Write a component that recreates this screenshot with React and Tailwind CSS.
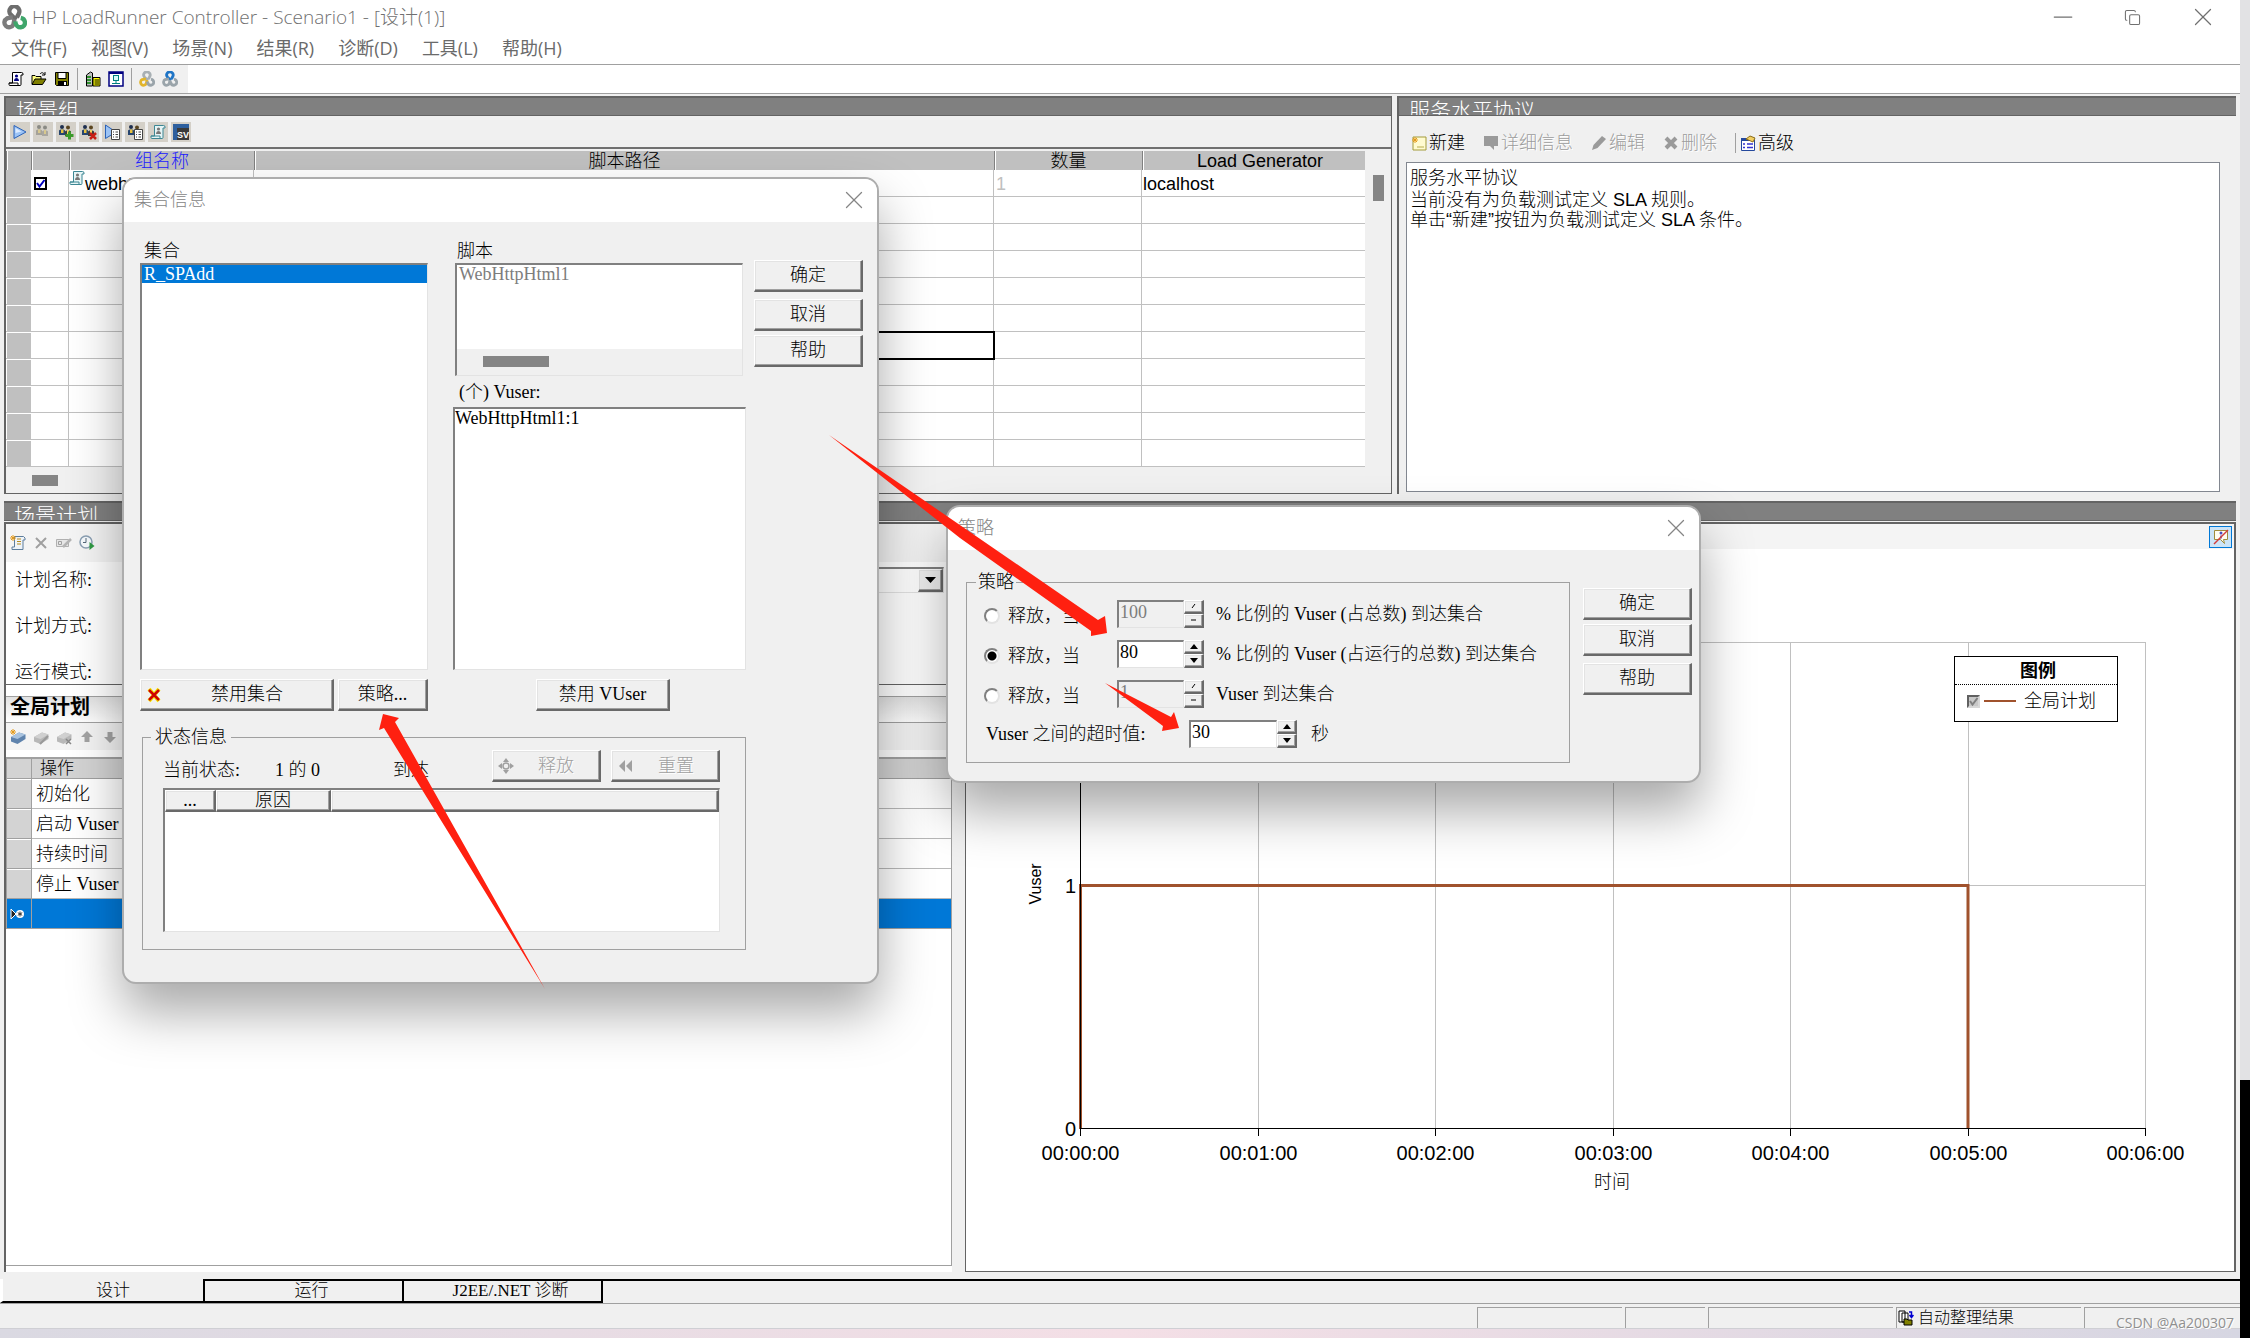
import { useState } from 'react';
import { X, Minus, Copy } from 'lucide-react';

const SONG = "font-light font-['Liberation_Serif','Noto_Sans_CJK_SC',serif]";
const ARIAL = "font-['Liberation_Sans','Noto_Sans_CJK_SC',sans-serif]";
const SEGOE = "font-['Open_Sans','Noto_Sans_CJK_SC',sans-serif]";

const raised =
  'bg-[#f0f0f0] border-t border-l border-r-2 border-b-2 border-t-white border-l-white border-r-[#696969] border-b-[#696969] shadow-[inset_-1px_-1px_0_#a0a0a0,inset_1px_1px_0_#e3e3e3]';
const sunken = 'bg-white border-t-2 border-l-2 border-r border-b border-t-[#808080] border-l-[#808080] border-r-[#e3e3e3] border-b-[#e3e3e3]';

// --- small toolbar drawings, all on a 16x16 canvas ---
const Svg = ({ size = 16, children }) => (
  <svg width={size} height={size} viewBox="0 0 16 16" className="shrink-0" fill="none" aria-hidden="true">
    {children}
  </svg>
);

// three interlocked loops, the last one is open at the top
const Knot = ({ size = 16, top, left, right }) => (
  <Svg size={size}>
    <path d="M9 9.500L5.600 6.200A3.200 3.200 0 1 1 10.800 5.400L9.500 8" stroke={top} strokeWidth="2.800" />
    <path d="M7 7.800L3.200 8.600A3 3 0 1 0 7.300 12.500L8 9" stroke={left} strokeWidth="2.800" />
    <path d="M8.500 10.500C9 16 15.500 15 14.600 10.600C14.400 9.500 13.500 8.500 12 8.200" stroke={right} strokeWidth="2.800" />
  </Svg>
);

const ScriptIcon = ({ stroke = '#000', fill = '#fff', man = '#000080' }) => (
  <Svg>
    <path d="M4.500 1.500h9a1.500 1.500 0 0 1 1.500 1.500v1h-2v9.500a1 1 0 0 1-1 1H2a1 1 0 0 1-1-1V12h3.500z" fill={fill} stroke={stroke} />
    <path d="M1 12h9v2" stroke={stroke} />
    <circle cx="8.500" cy="5" r="1.600" fill={man} />
    <path d="M6 10c0-4 5-4 5 0z" fill={man} />
  </Svg>
);

const OpenIcon = () => (
  <Svg>
    <path d="M1 13V4.500h3l1 1h5V8" fill="#ffff80" stroke="#000" />
    <path d="M1 13.500l3-5.500h11l-3.500 5.500z" fill="#808000" stroke="#000" />
    <path d="M9 3c1.500-2 3.500-1.500 4.500.5M14 1v3h-3" stroke="#000" />
  </Svg>
);

const SaveIcon = () => (
  <Svg>
    <path d="M1.500 1.500h13v13h-12l-1-1z" fill="#808000" stroke="#000" />
    <path d="M4 1.500h8v6H4z" fill="#fff" stroke="#000" />
    <path d="M4 10h9v5H4z" fill="#000" />
    <path d="M10 11h2v3h-2z" fill="#fff" />
  </Svg>
);

const ServerIcon = () => (
  <Svg>
    <path d="M1.500 4l4-3 2 1v13h-6z" fill="#c0c0c0" stroke="#000" />
    <path d="M2 6h4M2 9h4M2 12h4" stroke="#008000" strokeWidth="1.500" />
    <path d="M8 6.500h7V15H8z" fill="#ffff00" stroke="#000" />
    <path d="M9.500 9H14M9.500 11H14M9.500 13H14" stroke="#000" />
  </Svg>
);

const MonitorIcon = () => (
  <Svg>
    <rect x="1" y="1" width="14" height="14" fill="#fff" stroke="#000080" strokeWidth="1.500" />
    <path d="M1 2h14" stroke="#000080" strokeWidth="2" />
    <rect x="5.500" y="4.500" width="5" height="5" fill="#d8f8f8" stroke="#008080" />
    <path d="M8 9.500v3M4 12.500h8" stroke="#008080" />
  </Svg>
);

const PlayIcon = () => (
  <Svg>
    <path d="M2 1.500L14 8 2 14.500z" fill="#9cc3f5" stroke="#2a62b8" />
    <path d="M3.500 4v5l6-1.500z" fill="#dcebff" />
  </Svg>
);

const ListSheet = () => (
  <g>
    <path d="M7.500 5.500h8v10h-8z" fill="#fff" stroke="#444" />
    <path d="M9 8h1M11.500 8H14M9 10.500h1M11.500 10.500H14M9 13h1M11.500 13H14" stroke="#444" />
  </g>
);

const People = ({ gray, mark }) => (
  <Svg>
    <circle cx="4" cy="3" r="2" fill={gray ? '#8a8a84' : '#1e2f4f'} />
    <path d="M1 11V6.500C1 5 7 5 7 6.500V11z" fill={gray ? '#a5a299' : '#27456f'} />
    <path d="M3 5.500h2.500V9H3z" fill={gray ? '#d8c88e' : '#e8c240'} />
    <circle cx="10" cy="3.500" r="2" fill={gray ? '#8a8a84' : '#5a4520'} />
    <path d="M7 12V7.500C7 6 13 6 13 7.500V12z" fill={gray ? '#aaa79f' : '#3d3d3d'} />
    <path d="M9 6h2v4H9z" fill={gray ? '#d8c88e' : '#f0d060'} />
    {mark === 'add' && <path d="M11.500 7.500v8M7.500 11.500h8" stroke="#3c9a2a" strokeWidth="3" />}
    {mark === 'del' && <path d="M9 9l6 6M15 9l-6 6" stroke="#c81e14" strokeWidth="2.500" />}
    {mark === 'list' && <ListSheet />}
  </Svg>
);

const PlayList = () => (
  <Svg>
    <path d="M1.500 1L12 8 1.500 14.500z" fill="#9cc3f5" stroke="#2a62b8" />
    <ListSheet />
  </Svg>
);

const SvIcon = () => (
  <Svg>
    <path d="M0 0h16v4H4v12H0z" fill="#2d5f9e" />
    <path d="M4 4h12v12H4z" fill="#3a3a3a" />
    <text x="10" y="14" textAnchor="middle" fontSize="9" fontWeight="bold" fill="#fff" fontFamily="Liberation Sans, sans-serif">
      SV
    </text>
  </Svg>
);

const Star = ({ x = 3, y = 3 }) => (
  <path
    d={`M${x - 3} ${y}h6M${x} ${y - 3}v6M${x - 2} ${y - 2}l4 4M${x + 2} ${y - 2}l-4 4`}
    stroke="#e39a1c"
    strokeWidth="1"
  />
);

const NewPlanIcon = () => (
  <Svg>
    <path d="M4.500 1.500h9l1.500 1.500v2h-2v9.500H2V12h2.500z" fill="#eef3f8" stroke="#5d7d9c" />
    <path d="M7 4h4M7 6.500h4M7 9h4" stroke="#b78b1e" />
    <Star />
  </Svg>
);

const CrossIcon = ({ color = '#a0a0a0', width = 2 }) => (
  <Svg>
    <path d="M3 3l10 10M13 3L3 13" stroke={color} strokeWidth={width} />
  </Svg>
);

const RenameIcon = () => (
  <Svg>
    <path d="M.5 4.500h12v7H.5z" fill="#e6e6e6" stroke="#b0b0b0" />
    <path d="M2.500 6.500h3v3h-3z" stroke="#a0a0a0" />
    <path d="M7 12l8-8" stroke="#b4b4b4" strokeWidth="2.500" />
  </Svg>
);

const ClockIcon = () => (
  <Svg>
    <circle cx="7" cy="7" r="6" fill="#f6fafd" stroke="#8ba0b4" strokeWidth="1.500" />
    <path d="M7 3v4.500H4" stroke="#55687a" />
    <path d="M10.500 7l5 4-5 4z" fill="#2f9a43" />
  </Svg>
);

const CubeIcon = ({ gray, mark }) => (
  <Svg>
    <path d="M1 8l8-4.500 6.500 2V10l-8 5L1 12.500z" fill={gray ? '#b8b8b8' : '#5f83ad'} />
    <path d="M1 8l8-4.500 6.500 2L7.500 10z" fill={gray ? '#d0d0d0' : '#a9c3df'} />
    {!gray && <Star />}
    {mark === 'edit' && <path d="M7 15l8-8" stroke="#999" strokeWidth="2" />}
    {mark === 'del' && <path d="M10 10l5 5M15 10l-5 5" stroke="#888" strokeWidth="1.500" />}
  </Svg>
);

const ArrowIcon = ({ down }) => (
  <Svg>
    <path d={down ? 'M8 14L2 8h3.500V3h5v5H14z' : 'M8 2l6 6h-3.500v5h-5V8H2z'} fill="#a3a3a3" />
  </Svg>
);

const NewSlaIcon = () => (
  <Svg>
    <path d="M2 2h10l3 0v13H2z" fill="#fffbd0" stroke="#a39b3a" />
    <path d="M6 12h7" stroke="#b8ad50" />
    <Star x={4} y={5} />
  </Svg>
);

const NoteIcon = () => (
  <Svg>
    <path d="M1 1h14v10h-4v4l-4-4H1z" fill="#9a9a9a" />
  </Svg>
);

const PencilIcon = () => (
  <Svg>
    <path d="M1 15l1.500-5L11 1l4 3-8.500 9z" fill="#9a9a9a" />
  </Svg>
);

const AdvancedIcon = () => (
  <Svg>
    <path d="M1.500 4.500h13v11h-13z" fill="#fff" stroke="#24489c" />
    <path d="M1 3h9v3H1z" fill="#24489c" />
    <path d="M3 9h2M7 9h6M3 12.500h2M7 12.500h6" stroke="#3434d0" strokeWidth="1.500" />
    <path d="M6 4l4-3 5 2-2 4z" fill="#f2cf63" stroke="#8a6b17" />
  </Svg>
);

const CollateIcon = () => (
  <Svg>
    <path d="M1 1h6v11H1zM4 3h6v9H4z" fill="#fff" stroke="#000" />
    <path d="M6 15V9h3l1 1h4v5z" fill="#808000" stroke="#000" />
    <path d="M11 2h2.500v5M11.500 5l2 2.500 2-2.500" stroke="#0000d0" strokeWidth="1.500" />
  </Svg>
);

const NoTipIcon = () => (
  <Svg>
    <path d="M1.500 1.500h13v9h-4l1 4-4-4h-6z" fill="#fffdf0" stroke="#a08c3c" />
    <circle cx="8" cy="4" r="1.500" fill="#4a4ac0" />
    <path d="M8 6.500v3" stroke="#4a4ac0" strokeWidth="1.500" />
    <path d="M1 15L15 1" stroke="#d23c3c" strokeWidth="1.500" />
  </Svg>
);

// --- shared controls ---
const PushButton = ({ className = 'justify-center', children, ...rest }) => (
  <button type="button" className={`h-8 flex items-center text-[18px] ${raised} ${className}`} {...rest}>
    {children}
  </button>
);

const IconButton = ({ label, className = '', children }) => (
  <button type="button" aria-label={label} className={`flex items-center justify-center shrink-0 ${className}`}>
    {children}
  </button>
);

const CheckBox = ({ label, disabled, className }) => {
  const [checked, setChecked] = useState(true);
  return (
    <span className="relative size-[13px] shrink-0">
      <input
        type="checkbox"
        aria-label={label}
        checked={checked}
        disabled={disabled}
        onChange={e => setChecked(e.target.checked)}
        className={`block size-[13px] appearance-none ${className}`}
      />
      {checked && (
        <svg className="absolute inset-0 pointer-events-none" width="13" height="13" viewBox="0 0 13 13" fill="none" aria-hidden="true">
          <path d="M3 6l2.500 3.500L10.500 3" stroke={disabled ? '#808080' : '#0000c0'} strokeWidth="2" />
        </svg>
      )}
    </span>
  );
};

const PanelHeader = ({ children }) => (
  <h2
    className={`h-5 pl-[10px] overflow-hidden leading-[26px] text-[21px] text-white bg-[#808080] border-t-2 border-b border-[#646464] ${SONG}`}
  >
    {children}
  </h2>
);

const SpinBox = ({ value, label, disabled, className = '' }) => {
  const [val, setVal] = useState(value);
  return (
    <div className={`flex h-7 ${className}`}>
      <input
        aria-label={label}
        value={val}
        disabled={disabled}
        onChange={e => setVal(e.target.value)}
        className={`flex-1 min-w-0 pl-px pb-1 text-[18px] ${sunken} disabled:bg-[#f0f0f0] disabled:text-[#7d7d7d]`}
      />
      <div className="w-5 flex flex-col">
        {['up', 'down'].map(dir => (
          <button
            key={dir}
            type="button"
            disabled={disabled}
            aria-label={`${label} ${dir}`}
            className={`flex-1 flex items-center justify-center ${raised}`}
          >
            <svg width="8" height="5" viewBox="0 0 8 5" aria-hidden="true">
              {disabled ? (
                <path d={dir === 'up' ? 'M5 0L2 4' : 'M1 2h5'} stroke="#000" fill="none" />
              ) : (
                <path d={dir === 'up' ? 'M4 0l4 5H0z' : 'M0 0h8L4 5z'} fill="#000" />
              )}
            </svg>
          </button>
        ))}
      </div>
    </div>
  );
};

const Dialog = ({ title, className, children }) => (
  <section
    role="dialog"
    aria-label={title}
    className={`absolute rounded-[14px] overflow-hidden border-2 border-[#adadad] bg-[#f0f0f0] shadow-[0_28px_52px_rgba(0,0,0,0.34)] ${SONG} ${className}`}
  >
    <header className="h-[43px] pl-[10px] pr-2 pb-px flex items-center justify-between bg-white text-[18px] text-[#858585]">
      <span>{title}</span>
      <IconButton label="关闭">
        <X size={30} strokeWidth={1} />
      </IconButton>
    </header>
    {children}
  </section>
);

// --- main window parts ---
const menus = ['文件(F)', '视图(V)', '场景(N)', '结果(R)', '诊断(D)', '工具(L)', '帮助(H)'];

const groupTools = [
  ['启动场景', <PlayIcon />],
  ['Vuser', <People gray />],
  ['添加组', <People mark="add" />],
  ['删除组', <People mark="del" />],
  ['运行时设置', <PlayList />],
  ['详细信息', <People mark="list" />],
  ['查看脚本', <ScriptIcon stroke="#3d8794" fill="#e6f4f5" man="#777" />],
  ['服务虚拟化', <SvIcon />],
];

const ScenarioGroups = () => {
  const th = 'h-[19px] p-0 font-normal leading-[18px] border-l border-l-[#808080] shadow-[inset_1px_0_0_#fff]';
  const td = 'h-[27px] p-0 border-b border-r border-[#c0c0c0] leading-[28px] overflow-hidden whitespace-nowrap';
  return (
    <section className="w-[1388px] shrink flex flex-col border-l-2 border-b border-r border-[#646464]">
      <PanelHeader>场景组</PanelHeader>
      <div className="h-[31px] px-1 flex items-center gap-[3px]">
        {groupTools.map(([label, icon]) => (
          <IconButton key={label} label={label} className="size-5 bg-[#d4d0c8]">
            {icon}
          </IconButton>
        ))}
      </div>
      <div className="pt-[2px] flex border-t-2 border-[#707070]">
        <table className={`flex-1 table-fixed border-separate border-spacing-0 text-[18px] bg-white ${ARIAL}`}>
          <colgroup>
            <col className="w-[25px]" />
            <col className="w-[38px]" />
            <col className="w-[185px]" />
            <col />
            <col className="w-[148px]" />
            <col className="w-[223px]" />
          </colgroup>
          <thead className="bg-[#c0c0c0]">
            <tr>
              <th className={th} />
              <th className={th} />
              <th className={`${th} text-[#2020ff]`}>
                <span className="font-light">组名称</span>
              </th>
              <th className={th}>
                <span className="font-light">脚本路径</span>
              </th>
              <th className={th}>
                <span className="font-light">数量</span>
              </th>
              <th className={`${th} pl-3`}>Load Generator</th>
            </tr>
          </thead>
          <tbody>
            <tr>
              <td className={`${td} bg-[#c0c0c0] border-[#808080] border-r-0`} />
              <td className={td}>
                <span className="flex pl-[3px]">
                  <CheckBox label="webhttphtml1" className="bg-white border-2 border-black" />
                </span>
              </td>
              <td className={td}>
                <span className="h-[26px] flex">
                  <ScriptIcon stroke="#3d8794" fill="#e6f4f5" man="#777" />
                  <span>webhttphtml1</span>
                </span>
              </td>
              <td className={`${td} leading-[26px]`}>
                <span className="block h-[26px]">E:\LoadRunner\HP094\WebHttpHtml1</span>
              </td>
              <td className={`${td} pl-[2px] text-[#c0c0c0]`}>
                <span className="block h-[26px]">1</span>
              </td>
              <td className={`${td} pl-px border-r-0`}>
                <span className="block h-[26px]">localhost</span>
              </td>
            </tr>
            {Array.from({ length: 10 }, (_, row) => (
              <tr key={row}>
                <td className={`${td} bg-[#c0c0c0] border-[#808080] border-r-0 shadow-[inset_1px_1px_0_#fff]`} />
                <td className={td} />
                <td className={td} />
                <td className={row === 5 ? `${td} outline-2 -outline-offset-1 outline-black` : td} />
                <td className={td} />
                <td className={`${td} border-r-0`} />
              </tr>
            ))}
          </tbody>
        </table>
        <div className="w-[26px] pt-6 flex justify-center">
          <div className="w-[11px] h-[26px] bg-[#858585]" />
        </div>
      </div>
      <div className="h-[26px] pl-[26px] flex items-center">
        <div className="w-[26px] h-[11px] bg-[#858585]" />
      </div>
    </section>
  );
};

const SlaTool = ({ icon, disabled, children }) => (
  <button
    type="button"
    disabled={disabled}
    className="flex items-center gap-[2px] disabled:text-[#9d9d9d] disabled:[text-shadow:1px_1px_0_#fff]"
  >
    {icon}
    {children}
  </button>
);

const SlaPanel = () => (
  <section className="flex-1 flex flex-col border-l-2 border-[#646464]">
    <PanelHeader>服务水平协议</PanelHeader>
    <div className={`h-[46px] pl-3 pt-2 flex items-center gap-[18px] text-[18px] ${SONG}`}>
      <SlaTool icon={<NewSlaIcon />}>新建</SlaTool>
      <SlaTool icon={<NoteIcon />} disabled>
        详细信息
      </SlaTool>
      <SlaTool icon={<PencilIcon />} disabled>
        编辑
      </SlaTool>
      <SlaTool icon={<CrossIcon color="#9a9a9a" width={4} />} disabled>
        删除
      </SlaTool>
      <div className="flex items-center gap-1">
        <div className="w-px h-5 bg-[#a0a0a0]" />
        <SlaTool icon={<AdvancedIcon />}>高级</SlaTool>
      </div>
    </div>
    <div className={`flex-1 ml-[7px] mr-4 mb-[2px] pl-[3px] pt-[5px] bg-white border border-[#828790] text-[18px] font-light ${ARIAL}`}>
      <p className="leading-5">服务水平协议</p>
      <p className="leading-6">当前没有为负载测试定义 SLA 规则。</p>
      <p className="leading-4">单击“新建”按钮为负载测试定义 SLA 条件。</p>
    </div>
  </section>
);

const PlanField = ({ id, label, children }) => (
  <div className="h-6 flex items-center">
    <label htmlFor={id} className="w-[180px] shrink-0 text-[18px]">
      {label}
    </label>
    {children}
  </div>
);

const PlanPanel = () => (
  <section className={`w-[948px] shrink-0 flex flex-col bg-white border-l-2 border-t-2 border-[#646464] ${SONG}`}>
    <div className="h-[38px] pl-1 flex items-center gap-[7px] bg-[#f4f4f4]">
      <IconButton label="新建计划"><NewPlanIcon /></IconButton>
      <IconButton label="删除计划"><CrossIcon /></IconButton>
      <IconButton label="重命名计划"><RenameIcon /></IconButton>
      <IconButton label="开始时间"><ClockIcon /></IconButton>
    </div>
    <div className="pt-[6px] pl-[9px] pr-2 flex flex-col gap-[22px] border-b border-[#646464]">
      <PlanField id="plan-name" label="计划名称:">
        <div className={`flex-1 h-[26px] flex ${sunken}`}>
          <select id="plan-name" className="flex-1 appearance-none">
            <option value="" />
          </select>
          <span className={`w-[25px] flex items-center justify-center ${raised}`}>
            <svg width="11" height="6" viewBox="0 0 11 6" aria-hidden="true">
              <path d="M0 0h11L5.500 6z" />
            </svg>
          </span>
        </div>
      </PlanField>
      <PlanField id="plan-by" label="计划方式:">
        <input id="plan-by" type="radio" defaultChecked />
      </PlanField>
      <PlanField id="run-mode" label="运行模式:">
        <input id="run-mode" type="radio" defaultChecked />
      </PlanField>
    </div>
    <div className="mt-[11px] flex-1 mb-[6px] flex flex-col border-t border-r border-b border-[#a0a0a0]">
      <h3 className="h-[26px] pl-1 text-[20px] font-bold leading-5 bg-linear-to-b from-[#e2e2e2] to-white border-b border-[#a0a0a0]">
        全局计划
      </h3>
      <div className="h-[27px] pl-1 flex items-center gap-[7px] bg-[#f4f4f4]">
        <IconButton label="添加操作"><CubeIcon /></IconButton>
        <IconButton label="编辑操作"><CubeIcon gray mark="edit" /></IconButton>
        <IconButton label="删除操作"><CubeIcon gray mark="del" /></IconButton>
        <IconButton label="上移"><ArrowIcon /></IconButton>
        <IconButton label="下移"><ArrowIcon down /></IconButton>
      </div>
      <table className="mt-[7px] w-full border-separate border-spacing-0 text-[18px] border-t-2 border-l border-[#a0a0a0]">
        <thead>
          <tr className="bg-[#d3d3d3]">
            <th className="w-[25px] h-5 p-0 border-r border-b border-[#a0a0a0]" />
            <th className="p-0 pl-2 text-left font-light text-[17px] leading-[18px] border-b border-[#a0a0a0]">操作</th>
          </tr>
        </thead>
        <tbody>
          {['初始化', '启动 Vuser', '持续时间', '停止 Vuser'].map(action => (
            <tr key={action}>
              <td className="h-[30px] p-0 bg-[#d3d3d3] border-r border-b border-[#a0a0a0] shadow-[inset_0_1px_0_#fff]" />
              <td className="p-0 pl-1 leading-7 border-b border-[#b8b8b8]">{action}</td>
            </tr>
          ))}
          <tr className="bg-[#0078d7] text-white">
            <td className="h-[30px] p-0 pl-[2px] border-r border-b border-[#a0a0a0]">
              <Svg>
                <path d="M2 3v10l5-5z" stroke="#fff" fill="#222" />
                <circle cx="11" cy="8" r="4" fill="#fff" />
                <path d="M11 5.500v5M8.800 6.700l4.400 2.600M13.200 6.700L8.800 9.300" stroke="#333" />
              </Svg>
            </td>
            <td className="p-0 border-b border-[#a0a0a0]" />
          </tr>
        </tbody>
      </table>
    </div>
  </section>
);

const times = ['00:00:00', '00:01:00', '00:02:00', '00:03:00', '00:04:00', '00:05:00', '00:06:00'];
const tickX = i => Math.round(114 + i * 177.5) + 0.5;

const ScheduleChart = () => (
  <svg viewBox="0 0 1268 721" className={`w-full ${ARIAL}`} role="img" aria-label="全局计划">
    <g stroke="#c0c0c0" fill="none">
      <path d="M114 93.500H1179.500M114 336.500H1179.500" />
      {times.map((time, i) => (
        <path key={time} d={`M${tickX(i)} 93V580`} />
      ))}
    </g>
    <path d="M114.500 580V336.500H1002V580" stroke="#a0522d" strokeWidth="3" fill="none" />
    <path d="M114.500 93V587M114 579.500H1180" stroke="#000" />
    {times.map((time, i) => (
      <g key={time}>
        <path d={`M${tickX(i)} 580v7`} stroke="#000" />
        <text x={tickX(i)} y="611" textAnchor="middle" className="text-[20px]">
          {time}
        </text>
      </g>
    ))}
    <text x="110" y="344" textAnchor="end" className="text-[20px]">1</text>
    <text x="110" y="587" textAnchor="end" className="text-[20px]">0</text>
    <text transform="translate(75 335) rotate(-90)" textAnchor="middle" className="text-[16px]">Vuser</text>
    <text x="646" y="639" textAnchor="middle" className="text-[18px] font-light">时间</text>
  </svg>
);

const ChartPanel = () => (
  <section className="flex-1 flex flex-col bg-white border-t-2 border-l border-r-2 border-b border-[#646464]">
    <div className="h-[25px] pr-[2px] flex items-center justify-end bg-[#f4f4f4]">
      <IconButton label="提示" className="w-[23px] h-[22px] bg-[#cce4f7] border border-[#0078d7]">
        <NoTipIcon />
      </IconButton>
    </div>
    <div className="relative">
      <ScheduleChart />
      <div className={`absolute right-[116px] top-[107px] w-[164px] h-[66px] bg-white border border-black text-[18px] ${ARIAL}`}>
        <div className="h-7 pl-1 font-bold text-center leading-7 border-b border-dotted border-black">图例</div>
        <label className="h-8 pl-3 flex items-center gap-1">
          <CheckBox
            label="全局计划"
            disabled
            className="bg-[#c8c8c8] border-2 border-t-[#606060] border-l-[#606060] border-r-[#d8d8d8] border-b-[#d8d8d8]"
          />
          <span className="w-8 h-[2px] bg-[#a0522d]" />
          <span className="pl-1 font-light">全局计划</span>
        </label>
      </div>
    </div>
  </section>
);

// --- dialogs ---
const RendezvousDialog = () => (
  <Dialog title="集合信息" className="left-[122px] top-[177px] w-[757px]">
    <div className="pt-4 pl-4 pb-8 text-[18px]">
      <div className="flex">
        <div className="w-72 flex flex-col">
          <div className="h-[25px] pl-1 leading-[26px]">集合</div>
          <ul role="listbox" aria-label="集合" className={`h-[407px] ${sunken}`}>
            <li role="option" aria-selected="true" className="h-[18px] pl-[2px] leading-[18px] bg-[#0078d7] text-white">
              R_SPAdd
            </li>
          </ul>
        </div>
        <div className="ml-[25px] w-[293px]">
          <div className="h-[25px] pl-1 leading-[26px]">脚本</div>
          <div className={`ml-[2px] w-72 h-[113px] flex flex-col ${sunken}`}>
            <div className="flex-1 pl-[2px] leading-[18px] text-[#7d7d7d]">WebHttpHtml1</div>
            <div className="h-[26px] pl-[26px] pb-[2px] flex items-center bg-[#f0f0f0]">
              <div className="w-[66px] h-[11px] bg-[#858585]" />
            </div>
          </div>
          <div className="h-[31px] pl-[6px] leading-8">(个) Vuser:</div>
          <ul role="listbox" aria-label="Vuser" className={`h-[263px] ${sunken}`}>
            <li role="option" aria-selected="false" className="leading-[18px]">
              WebHttpHtml1:1
            </li>
          </ul>
        </div>
        <div className="ml-2 pt-[22px] w-[109px] flex flex-col">
          <PushButton>确定</PushButton>
          <PushButton className="mt-[7px] justify-center">取消</PushButton>
          <PushButton className="mt-1 justify-center">帮助</PushButton>
        </div>
      </div>
      <div className="mt-[9px] flex">
        <PushButton className="w-[194px] pl-[5px]">
          <svg width="16" height="16" viewBox="0 0 16 16" aria-hidden="true">
            <path d="M3 2l10 12M13 2L3 14" stroke="#f2e200" strokeWidth="4" />
            <path d="M3 3l10 10M13 3L3 13" stroke="#d00000" strokeWidth="2.500" />
          </svg>
          <span className="flex-1 text-center">禁用集合</span>
        </PushButton>
        <PushButton className="ml-1 w-[90px] justify-center">策略...</PushButton>
        <PushButton className="ml-[108px] w-[134px] justify-center">禁用 VUser</PushButton>
      </div>
      <fieldset className="mt-[14px] ml-[2px] w-[604px] pt-px pl-5 pr-[25px] pb-[17px] border border-[#a0a0a0]">
        <legend className="-ml-3 px-1 leading-6">状态信息</legend>
        <div className="flex items-center leading-6">
          <span className="w-28 pt-2">当前状态:</span>
          <span className="w-[118px] pt-2">1 的 0</span>
          <span className="flex-1 pt-2">到达</span>
          <PushButton disabled className="w-[109px] pl-[5px] gap-6 text-[#a0a0a0] [text-shadow:1px_1px_0_#fff]">
            <Svg>
              <path d="M8 0l3 4H5zM8 16l3-4H5zM0 8l4-3v6zM16 8l-4-3v6z" fill="#a0a0a0" />
              <circle cx="8" cy="8" r="3" stroke="#a0a0a0" strokeWidth="1.500" />
            </Svg>
            释放
          </PushButton>
          <PushButton disabled className="ml-[10px] w-[109px] pl-[6px] gap-6 text-[#a0a0a0] [text-shadow:1px_1px_0_#fff]">
            <Svg>
              <path d="M7 2v12L1 8zM14 2v12L8 8z" fill="#a0a0a0" />
            </Svg>
            重置
          </PushButton>
        </div>
        <div className={`mt-[6px] h-[144px] ${sunken}`}>
          <table className="w-full table-fixed border-separate border-spacing-0">
            <thead>
              <tr>
                <th className={`w-[51px] h-[22px] p-0 font-light leading-[19px] ${raised}`}>...</th>
                <th className={`w-[115px] p-0 font-light leading-[19px] ${raised}`}>原因</th>
                <th className={`p-0 ${raised}`} />
              </tr>
            </thead>
          </table>
        </div>
      </fieldset>
    </div>
  </Dialog>
);

const policies = [
  { value: '100', text: '% 比例的 Vuser (占总数) 到达集合', disabled: true },
  { value: '80', text: '% 比例的 Vuser (占运行的总数) 到达集合', disabled: false },
  { value: '1', text: 'Vuser 到达集合', disabled: true },
];

const PolicyDialog = () => {
  const [selected, setSelected] = useState('80');
  return (
    <Dialog title="策略" className="left-[946px] top-[505px] w-[755px]">
      <div className="pt-5 pl-[18px] pb-[18px] flex text-[18px]">
        <fieldset className="w-[604px] pl-[17px] pb-2 border border-[#a0a0a0]">
          <legend className="-ml-2 px-[2px] leading-6">策略</legend>
          {policies.map(policy => (
            <div key={policy.value} className="h-10 flex items-center">
              <label className="w-[133px] pt-1 flex items-center gap-2">
                <input
                  type="radio"
                  name="policy"
                  checked={selected === policy.value}
                  onChange={() => setSelected(policy.value)}
                  className="appearance-none size-4 rounded-full bg-white border-2 border-t-[#808080] border-l-[#808080] border-r-[#e3e3e3] border-b-[#e3e3e3] checked:bg-[radial-gradient(#000_0_4px,#fff_5px)]"
                />
                释放，当
              </label>
              <SpinBox value={policy.value} label={policy.text} disabled={policy.disabled} className="w-[87px]" />
              <span className="pl-3 whitespace-nowrap">{policy.text}</span>
            </div>
          ))}
          <div className="h-10 flex items-center">
            <span className="w-[205px] pl-[2px]">Vuser 之间的超时值:</span>
            <SpinBox value="30" label="Vuser 之间的超时值" className="w-[108px]" />
            <span className="pl-[14px]">秒</span>
          </div>
        </fieldset>
        <div className="ml-[13px] pt-[18px] w-[109px] flex flex-col">
          <PushButton>确定</PushButton>
          <PushButton className="mt-1 justify-center">取消</PushButton>
          <PushButton className="mt-[7px] justify-center">帮助</PushButton>
        </div>
      </div>
    </Dialog>
  );
};

// Red pointers drawn over the windows
const Pointers = () => (
  <svg className="absolute left-0 top-0 pointer-events-none" width="1300" height="1000" viewBox="0 0 1300 1000" fill="#ff2010" aria-hidden="true">
    <path d="M829 435L1098 620L1105 616L1107 633L1091 636L1091 631L960 538Z" />
    <path d="M1105 683L1171 717L1174 712L1179 728L1162 731L1163 726Z" />
    <path d="M545 989L395 722L399 718L383 714L379 730L384 728Z" />
  </svg>
);

const App = () => {
  const [tab, setTab] = useState('设计');
  return (
    <div className="relative min-h-screen flex flex-col overflow-hidden text-black">
      <div className="flex-1 flex">
        <div className="flex-1 min-w-0 flex flex-col bg-[#f0f0f0]">
          <header className={`h-[34px] pl-[2px] flex items-center bg-white text-[#707070] ${SEGOE}`}>
            <Knot size={25} top="#6e6e6e" left="#7c7c7c" right="#3fa66b" />
            <h1 className="flex-1 pl-[5px] text-[19px] font-light">HP LoadRunner Controller - Scenario1 - [设计(1)]</h1>
            <div className="pr-[22px] flex gap-10">
              <IconButton label="最小化"><Minus size={30} strokeWidth={1} /></IconButton>
              <IconButton label="最大化" className="w-[30px] -scale-x-100"><Copy size={17} strokeWidth={1.500} className="rotate-90" /></IconButton>
              <IconButton label="关闭"><X size={30} strokeWidth={1} /></IconButton>
            </div>
          </header>
          <nav className={`h-[30px] pl-[11px] pb-[2px] flex items-center gap-6 bg-white text-[18px] text-[#6a6a6a] ${SEGOE}`}>
            {menus.map(menu => (
              <button key={menu} type="button">
                {menu}
              </button>
            ))}
          </nav>
          <div className="h-[30px] flex bg-white border-y border-[#a0a0a0]">
            <div className="w-[188px] pl-2 flex items-center gap-[7px] bg-[#f0f0f0]">
              <IconButton label="新建"><ScriptIcon /></IconButton>
              <IconButton label="打开"><OpenIcon /></IconButton>
              <IconButton label="保存"><SaveIcon /></IconButton>
              <div className="w-px h-[22px] bg-[#a0a0a0]" />
              <IconButton label="Load Generator"><ServerIcon /></IconButton>
              <IconButton label="监控"><MonitorIcon /></IconButton>
              <div className="w-px h-[22px] bg-[#a0a0a0]" />
              <IconButton label="Vuser 生成器"><Knot top="#a8b0b4" left="#e2b52c" right="#9aa4aa" /></IconButton>
              <IconButton label="分析"><Knot top="#1e74c6" left="#9aa4aa" right="#9aa4aa" /></IconButton>
            </div>
          </div>

          <main className="flex-1 flex flex-col pt-[2px] px-1">
            <div className="flex gap-[5px]">
              <ScenarioGroups />
              <SlaPanel />
            </div>
            <div className="mt-[7px] flex-1 flex flex-col">
              <PanelHeader>场景计划</PanelHeader>
              <div className="flex-1 mt-px mb-[7px] flex gap-[13px]">
                <PlanPanel />
                <ChartPanel />
              </div>
            </div>
          </main>

          <div className={`flex border-t-2 border-black border-b border-b-[#a0a0a0] text-[17px] ${SONG}`}>
            {['设计', '运行', 'J2EE/.NET 诊断'].map(name => (
              <button
                key={name}
                type="button"
                onClick={() => setTab(name)}
                className={
                  tab === name
                    ? 'w-[205px] h-6 -mt-[2px] pt-[2px] pl-5 border-l-[3px] border-l-white border-r-2 border-b-2 border-black bg-[#f0f0f0]'
                    : 'w-[199px] h-[22px] pl-4 border-r-2 border-b-2 border-black'
                }
              >
                <span className="block leading-5">{name}</span>
              </button>
            ))}
          </div>
          <footer className={`h-6 pt-[3px] flex justify-end gap-[3px] text-[16px] ${SONG}`}>
            <div className="w-[145px] border-t border-l border-[#a0a0a0]" />
            <div className="w-[80px] border-t border-l border-[#a0a0a0]" />
            <div className="w-[185px] border-t border-l border-[#a0a0a0]" />
            <div className="w-[185px] pl-px flex items-center gap-1 border-t border-l border-[#a0a0a0]">
              <CollateIcon />
              自动整理结果
            </div>
            <div className="w-[156px] border-t border-l border-[#a0a0a0]" />
          </footer>
          <div className="h-[10px] bg-linear-to-r from-[#dad9e2] via-[#f4dfe6] to-[#d6d6e2] border-t border-[#cfcfd4]" />
        </div>
        <div className="w-[10px] flex flex-col">
          <div className="flex-1 bg-[#e2e2e4]" />
          <div className="h-[258px] bg-black" />
        </div>
      </div>

      <RendezvousDialog />
      <PolicyDialog />
      <Pointers />
      <div className={`absolute right-4 bottom-px text-[14px] leading-7 text-[#8f8f8f] [text-shadow:1px_1px_0_#fff] ${SEGOE}`}>
        CSDN @Aa200307
      </div>
    </div>
  );
};

export default App;
